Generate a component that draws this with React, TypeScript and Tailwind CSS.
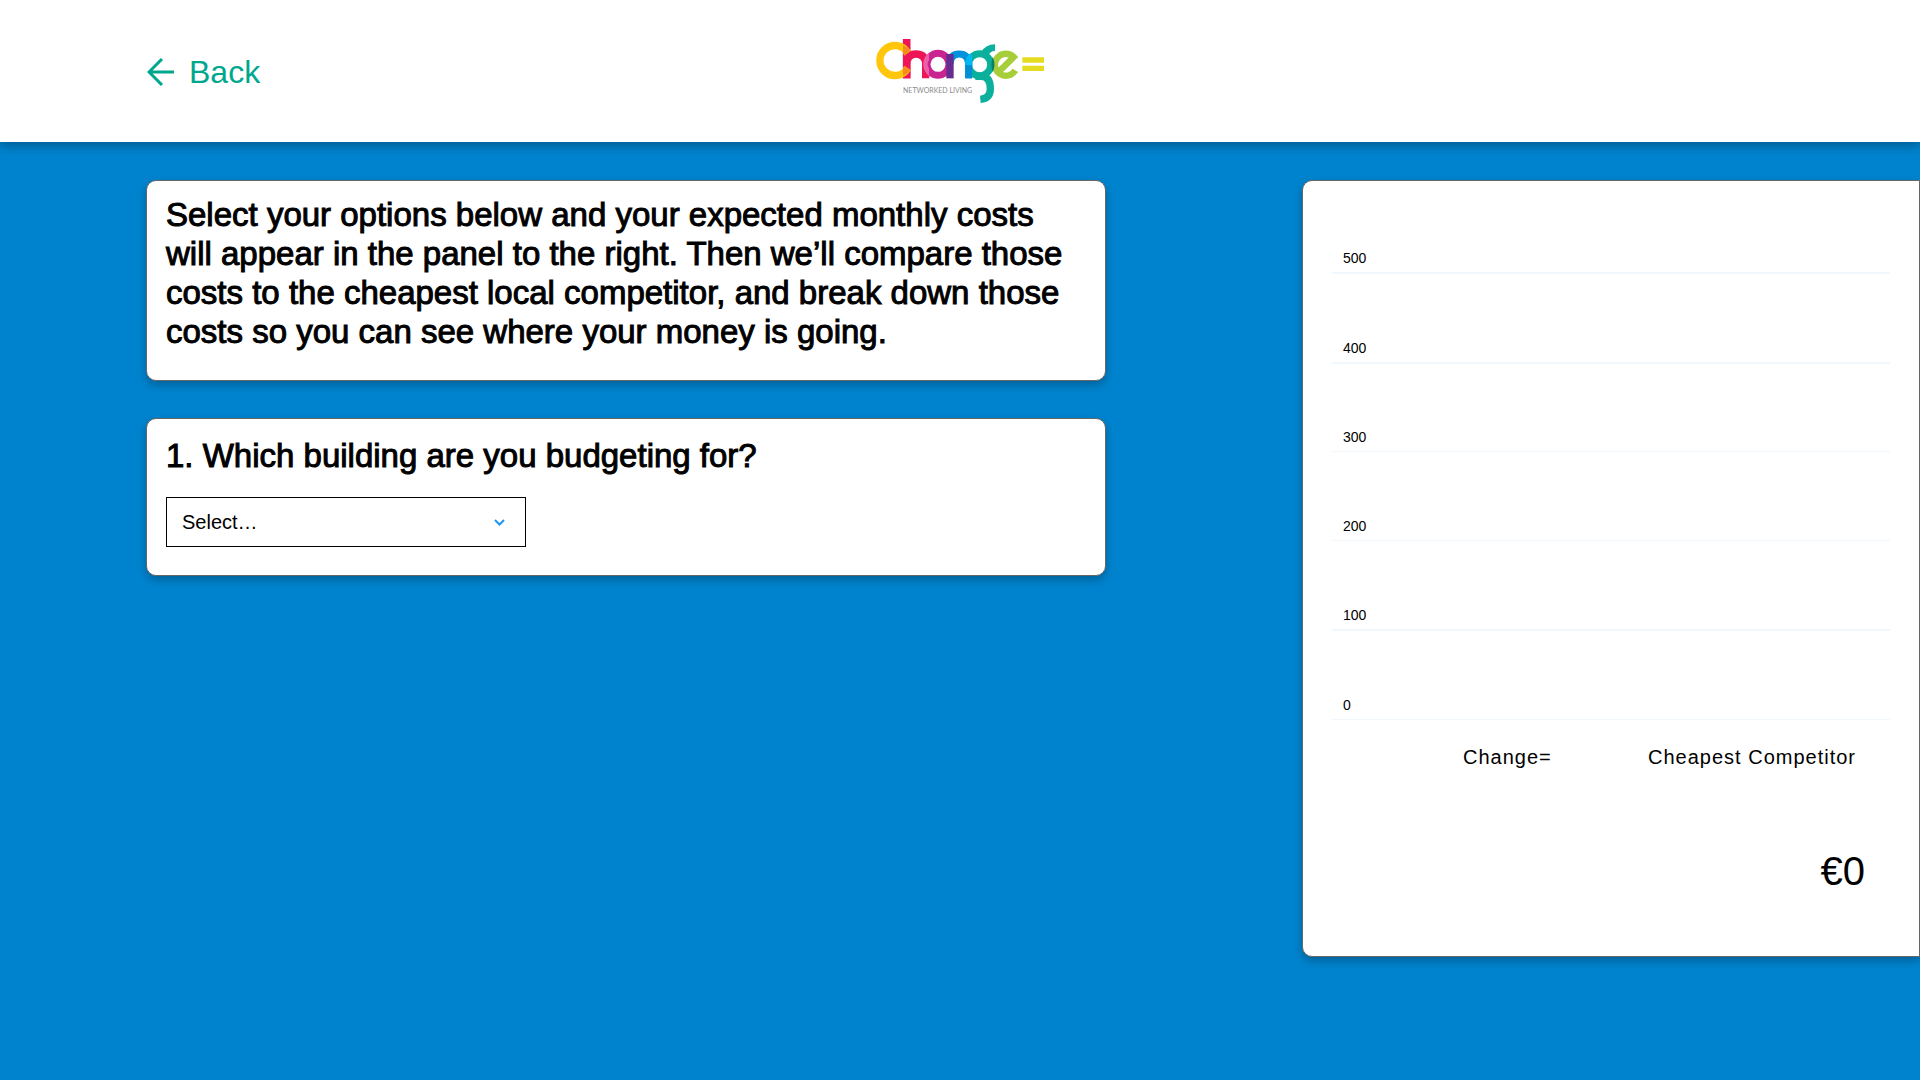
const heading = 'text-[33px] leading-[39px] [-webkit-text-stroke:1px_black]';
const card = 'rounded-[10px] border border-[#666666] bg-white px-[19px] shadow-[0_4px_8px_rgba(0,0,0,0.25)]';

const gridLines = [
  { value: 500, line: 'border-b-2' },
  { value: 400, line: 'border-b-2' },
  { value: 300, line: 'border-b' },
  { value: 200, line: 'border-b' },
  { value: 100, line: 'border-b-2' },
  { value: 0, line: 'border-b' },
];

function Logo() {
  return (
    <svg role="img" aria-label="Change= Networked Living" className="h-16 w-[168px] shrink-0" viewBox="48 42 504 192" fill="none">
      <path d="M140 42V160" stroke="#ed1556" strokeWidth="23" />
      <path d="M140 160V118Q141 87 168 87Q197 87 197 118V160" stroke="#ed1556" strokeWidth="22" />
      <path d="M143 83A45 45 0 1 0 143 130" stroke="#ffc60b" strokeWidth="22" />
      <path d="M129 60Q144 66 152 79L134 92L129 86ZM129 127L134 122L152 134Q144 146 129 153Z" fill="#f68b1f" />
      <circle cx="234" cy="118" r="33" stroke="#c9248f" strokeWidth="21" />
      <path d="M207 83A44 44 0 0 0 207 153V131A23 23 0 0 1 207 105Z" fill="#ef5fa7" />
      <path d="M326 160V118Q325 87 298 87Q270 87 270 118" stroke="#0092dc" strokeWidth="21" />
      <path d="M270 87V160" stroke="#662d91" strokeWidth="22" />
      <path d="M346 154H364Q391 154 391 191Q391 220 361 223" stroke="#0bb09d" strokeWidth="22" />
      <circle cx="359" cy="119" r="33" stroke="#0bb09d" strokeWidth="21" />
      <path d="M361 84Q376 58 405 58V78Q392 77 384 93Z" fill="#0bb09d" />
      <path d="M326 160V119" stroke="#008fd5" strokeWidth="21" />
      <path d="M315 120Q316 94 334 83Q337 90 337 120Z" fill="#00b9f2" />
      <path d="M418 139L461 96A33 33 0 1 0 466 136" stroke="#a6ce39" strokeWidth="19" />
      <path d="M398 96Q409 119 398 142Q390 119 398 96Z" fill="#087f6a" />
      <path d="M487 105H552M487 130H552" stroke="#e5dc22" strokeWidth="16" />
      <text x="129" y="203" fontSize="21" fill="#8a8a8a" fontFamily="Lato, sans-serif">NETWORKED LIVING</text>
    </svg>
  );
}

function BudgetChart() {
  return (
    <div className="px-[29px] pt-[3px]">
      <div className="flex h-[536px] flex-col">
        {gridLines.map(({ value, line }) => (
          <div key={value} className={`${line} flex flex-1 flex-col justify-end border-[#f0f7fd] px-[11px] pb-1`}>
            <span className="text-sm leading-5">{value}</span>
          </div>
        ))}
      </div>
      <div className="mt-[23px] flex justify-between pr-[34px] pl-[131px] text-xl leading-7 tracking-[1px]">
        <span>Change=</span>
        <span>Cheapest Competitor</span>
      </div>
    </div>
  );
}

export default function App() {
  return (
    <div className="flex min-h-screen flex-col overflow-hidden bg-[#0083ce] font-['Liberation_Sans',Arial,sans-serif] text-black">
      <header className="relative grid h-[142px] grid-cols-[1fr_auto_1fr] items-center bg-white px-[147px] shadow-[0_4px_10px_rgba(0,0,0,0.3)]">
        <a href="#back" className="flex items-center gap-[14px] pt-px text-[32px] leading-10 text-[#00a78e]">
          <svg className="h-[28px] w-[28px]" viewBox="0 0 28 28" fill="none" stroke="currentColor" strokeWidth="3" aria-hidden="true">
            <path d="M27 14H2M15 1L2 14L15 27" />
          </svg>
          Back
        </a>
        <Logo />
      </header>
      <main className="grid grid-cols-[960fr_618fr] items-start gap-x-[196px] pt-[38px] pl-[146px]">
        <div className="flex flex-col gap-[37px]">
          <section className={`${card} pt-[14px] pb-[29px]`}>
            <p className={heading}>
              Select your options below and your expected monthly costs will appear in the panel to the right. Then we’ll compare those costs to the cheapest local competitor, and break down those costs so you can see where your money is going.
            </p>
          </section>
          <section className={`${card} pt-[17px] pb-7`}>
            <label htmlFor="building" className={`${heading} block`}>1. Which building are you budgeting for?</label>
            <div className="relative mt-[22px] w-[360px]">
              <select id="building" className="h-[50px] w-full appearance-none border border-black bg-white px-[15px] text-xl">
                <option>Select…</option>
              </select>
              <svg className="pointer-events-none absolute top-[22px] right-[21px] h-[7px] w-[11px]" viewBox="0 0 11 7" fill="none" stroke="#2196f3" strokeWidth="2" aria-hidden="true">
                <path d="M1 1L5.5 5.5L10 1" />
              </svg>
            </div>
          </section>
        </div>
        <aside className="rounded-l-[10px] border border-[#666666] bg-white shadow-[0_4px_8px_rgba(0,0,0,0.25)]">
          <BudgetChart />
          <p className="mt-[76px] pr-[54px] pb-[61px] text-right text-[40px] leading-[48px]">€0</p>
        </aside>
      </main>
    </div>
  );
}
